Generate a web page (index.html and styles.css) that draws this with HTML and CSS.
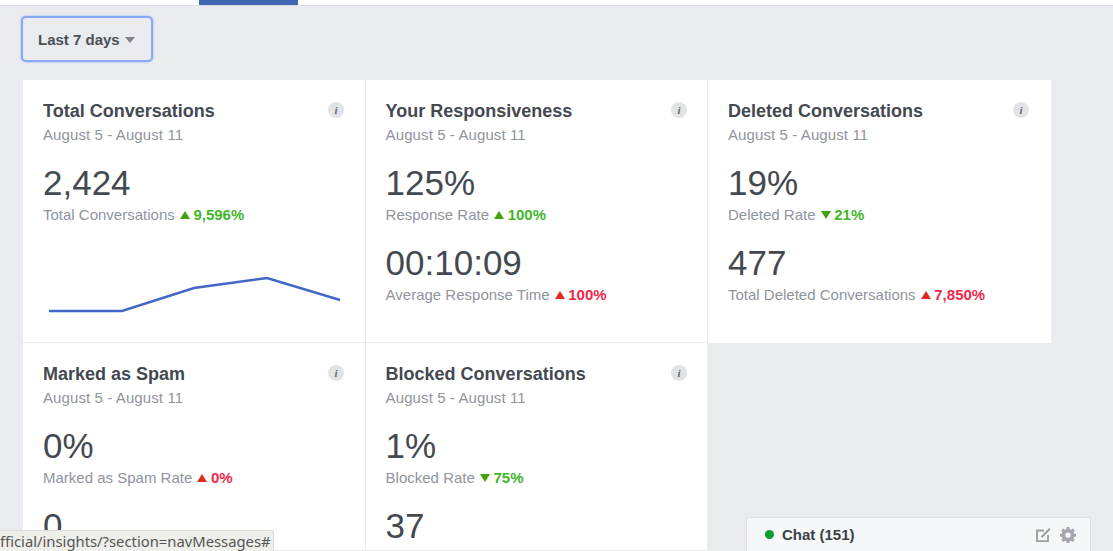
FILE: index.html
```html
<!DOCTYPE html>
<html lang="en">
<head>
<meta charset="utf-8">
<title>Insights</title>
<link rel="stylesheet" href="styles.css">
</head>
<body>
<header class="tabs"><div class="tab-active"></div></header>
<main class="content">
  <button class="range-btn" type="button">Last 7 days<span class="caret"></span></button>
  <section class="grid">
    <article class="card">
      <div class="card-head"><h2>Total Conversations</h2><span class="info">i</span></div>
      <p class="date">August 5 - August 11</p>
      <div class="metric">
        <div class="value">2,424</div>
        <div class="label">Total Conversations <span class="tri up green"></span><b class="green">9,596%</b></div>
      </div>
      <svg class="chart" width="300" height="50" viewBox="0 0 300 50">
        <polyline points="3,38 76,38 148,15 221,5 294,27" fill="none" stroke="#4267c8" stroke-width="2.400"/>
      </svg>
    </article>
    <article class="card">
      <div class="card-head"><h2>Your Responsiveness</h2><span class="info">i</span></div>
      <p class="date">August 5 - August 11</p>
      <div class="metric">
        <div class="value">125%</div>
        <div class="label">Response Rate <span class="tri up green"></span><b class="green">100%</b></div>
      </div>
      <div class="metric">
        <div class="value">00:10:09</div>
        <div class="label">Average Response Time <span class="tri up red"></span><b class="red">100%</b></div>
      </div>
    </article>
    <article class="card">
      <div class="card-head"><h2>Deleted Conversations</h2><span class="info">i</span></div>
      <p class="date">August 5 - August 11</p>
      <div class="metric">
        <div class="value">19%</div>
        <div class="label">Deleted Rate <span class="tri down green"></span><b class="green">21%</b></div>
      </div>
      <div class="metric">
        <div class="value">477</div>
        <div class="label">Total Deleted Conversations <span class="tri up red"></span><b class="red">7,850%</b></div>
      </div>
    </article>
    <article class="card">
      <div class="card-head"><h2>Marked as Spam</h2><span class="info">i</span></div>
      <p class="date">August 5 - August 11</p>
      <div class="metric">
        <div class="value">0%</div>
        <div class="label">Marked as Spam Rate <span class="tri up red"></span><b class="red">0%</b></div>
      </div>
      <div class="metric">
        <div class="value">0</div>
      </div>
    </article>
    <article class="card">
      <div class="card-head"><h2>Blocked Conversations</h2><span class="info">i</span></div>
      <p class="date">August 5 - August 11</p>
      <div class="metric">
        <div class="value">1%</div>
        <div class="label">Blocked Rate <span class="tri down green"></span><b class="green">75%</b></div>
      </div>
      <div class="metric">
        <div class="value">37</div>
      </div>
    </article>
  </section>
</main>
<div class="status-url"><span>fficial/insights/?section=navMessages#</span></div>
<aside class="chat">
  <span class="dot"></span><span class="chat-title">Chat (151)</span>
  <span class="chat-icons">
    <svg width="16" height="16" viewBox="0 0 16 16" fill="none" stroke="#9a9ea6"><path stroke-width="1.800" d="M12 8V14.100H1V3.500H8"/><path stroke-width="2" d="M5.500 10.200 13.800 1.800"/></svg>
    <svg width="16" height="16" viewBox="0 0 16 16"><path fill="#a3a7af" fill-rule="evenodd" d="M6.600 0h2.800l.4 2.200 1.200.5 1.800-1.300 2 2-1.300 1.800.5 1.200 2 .4v2.800l-2.100.4-.5 1.200 1.300 1.800-2 2-1.800-1.300-1.200.5-.4 2.200H6.600l-.4-2.200-1.200-.5-1.800 1.300-2-2 1.300-1.800-.5-1.200L0 9.600V6.800l2-.4.500-1.200-1.300-1.800 2-2L5 2.700l1.200-.5zM8 5.400a2.700 2.700 0 1 0 0 5.400 2.700 2.700 0 0 0 0-5.400z"/></svg>
  </span>
</aside>
</body>
</html>
```
FILE: styles.css
```css
* { box-sizing: border-box; }
body {
  margin: 0;
  height: 551px;
  overflow: hidden;
  background: #e9ebee;
  font-family: "Liberation Sans", Arial, sans-serif;
  color: #444950;
  position: relative;
}
.tabs {
  height: 6px;
  background: #fff;
  border-bottom: 1px solid #dddfe2;
  padding-left: 199px;
}
.tab-active { width: 99px; height: 5px; background: #4267b2; }
.content { padding: 10px 0 0 21px; }
.range-btn {
  display: flex;
  align-items: center;
  width: 132px;
  height: 46px;
  padding: 0 0 0 15px;
  background: #e9ebee;
  border: 2px solid #86a8f6;
  border-radius: 5px;
  box-shadow: 0 0 2px #86a8f6;
  font: bold 15px "Liberation Sans", Arial, sans-serif;
  color: #4b4f56;
}
.caret {
  margin: 2px 0 0 5px;
  border-left: 5.500px solid transparent;
  border-right: 5.500px solid transparent;
  border-top: 6px solid #7f8288;
}
.grid {
  display: grid;
  grid-template-columns: 343px 342px 343px;
  grid-template-rows: 263px 208px;
  margin: 18px 0 0 2px;
  width: 1028px;
}
.card {
  background: #fff;
  padding: 20px 20px 0;
  border-right: 1px solid #e9ebee;
  border-bottom: 1px solid #e9ebee;
  overflow: hidden;
}
.card:nth-child(3n+2) { padding-left: 19.600px; }
.card:nth-child(3) { border-right: 0; border-bottom: 0; }
.card-head { display: flex; justify-content: space-between; align-items: flex-start; }
h2 { margin: 0; font-size: 18px; line-height: 22px; font-weight: bold; color: #444950; }
.info {
  width: 16px; height: 16px;
  margin: 2px 1px 0 0;
  border-radius: 50%;
  background: #e2e3e5;
  color: #63676e;
  font: italic bold 11px/16px "Liberation Serif", serif;
  text-align: center;
}
.card:nth-child(3n+2) .info { margin-right: 0; }
.card:nth-child(3) .info { margin-right: 2px; }
.date { margin: 4px 0 0; font-size: 15px; line-height: 18px; letter-spacing: .1px; color: #90949c; }
.metric { margin-top: 17px; }
.metric + .metric { margin-top: 16px; }
.value { font-size: 35px; line-height: 44px; color: #444950; }
.label { font-size: 15px; line-height: 20px; color: #90949c; display: flex; align-items: center; white-space: pre; }
.label b { font-size: 15px; }
.tri { width: 0; height: 0; margin: 0 3.500px 0 1px; border-left: 5.500px solid transparent; border-right: 5.500px solid transparent; }
.tri.up.green { border-bottom: 8px solid #42a10e; }
.tri.up.red { border-bottom: 8px solid #e02a20; }
.tri.down.green { border-top: 8px solid #42a10e; }
b.green { color: #42b72a; }
b.red { color: #f02849; }
.chart { display: block; margin: 48px 0 0 3px; }
.status-url {
  position: absolute;
  left: 0; bottom: 0;
  width: 274px; height: 21px;
  background: #eeeeea;
  border: 1px solid #dcdcd8;
  border-left: 0; border-bottom: 0;
  border-radius: 0 3px 0 0;
  overflow: hidden;
  white-space: nowrap;
  font: 14.800px/20px "Noto Sans", sans-serif;
  color: #555;
}
.chat {
  position: absolute;
  left: 746px; bottom: 0;
  width: 345px; height: 34px;
  display: flex; align-items: center;
  padding: 0 14px 0 18px;
  background: #f6f7f9;
  border: 1px solid #dddfe2;
  border-bottom: 0;
  border-radius: 3px 3px 0 0;
}
.dot { width: 9px; height: 9px; border-radius: 50%; background: #0a9e2b; }
.chat-title { margin-left: 8px; font-size: 15px; font-weight: bold; color: #3c4047; }
.chat-icons { margin-left: auto; display: flex; gap: 8px; align-items: center; }
```
